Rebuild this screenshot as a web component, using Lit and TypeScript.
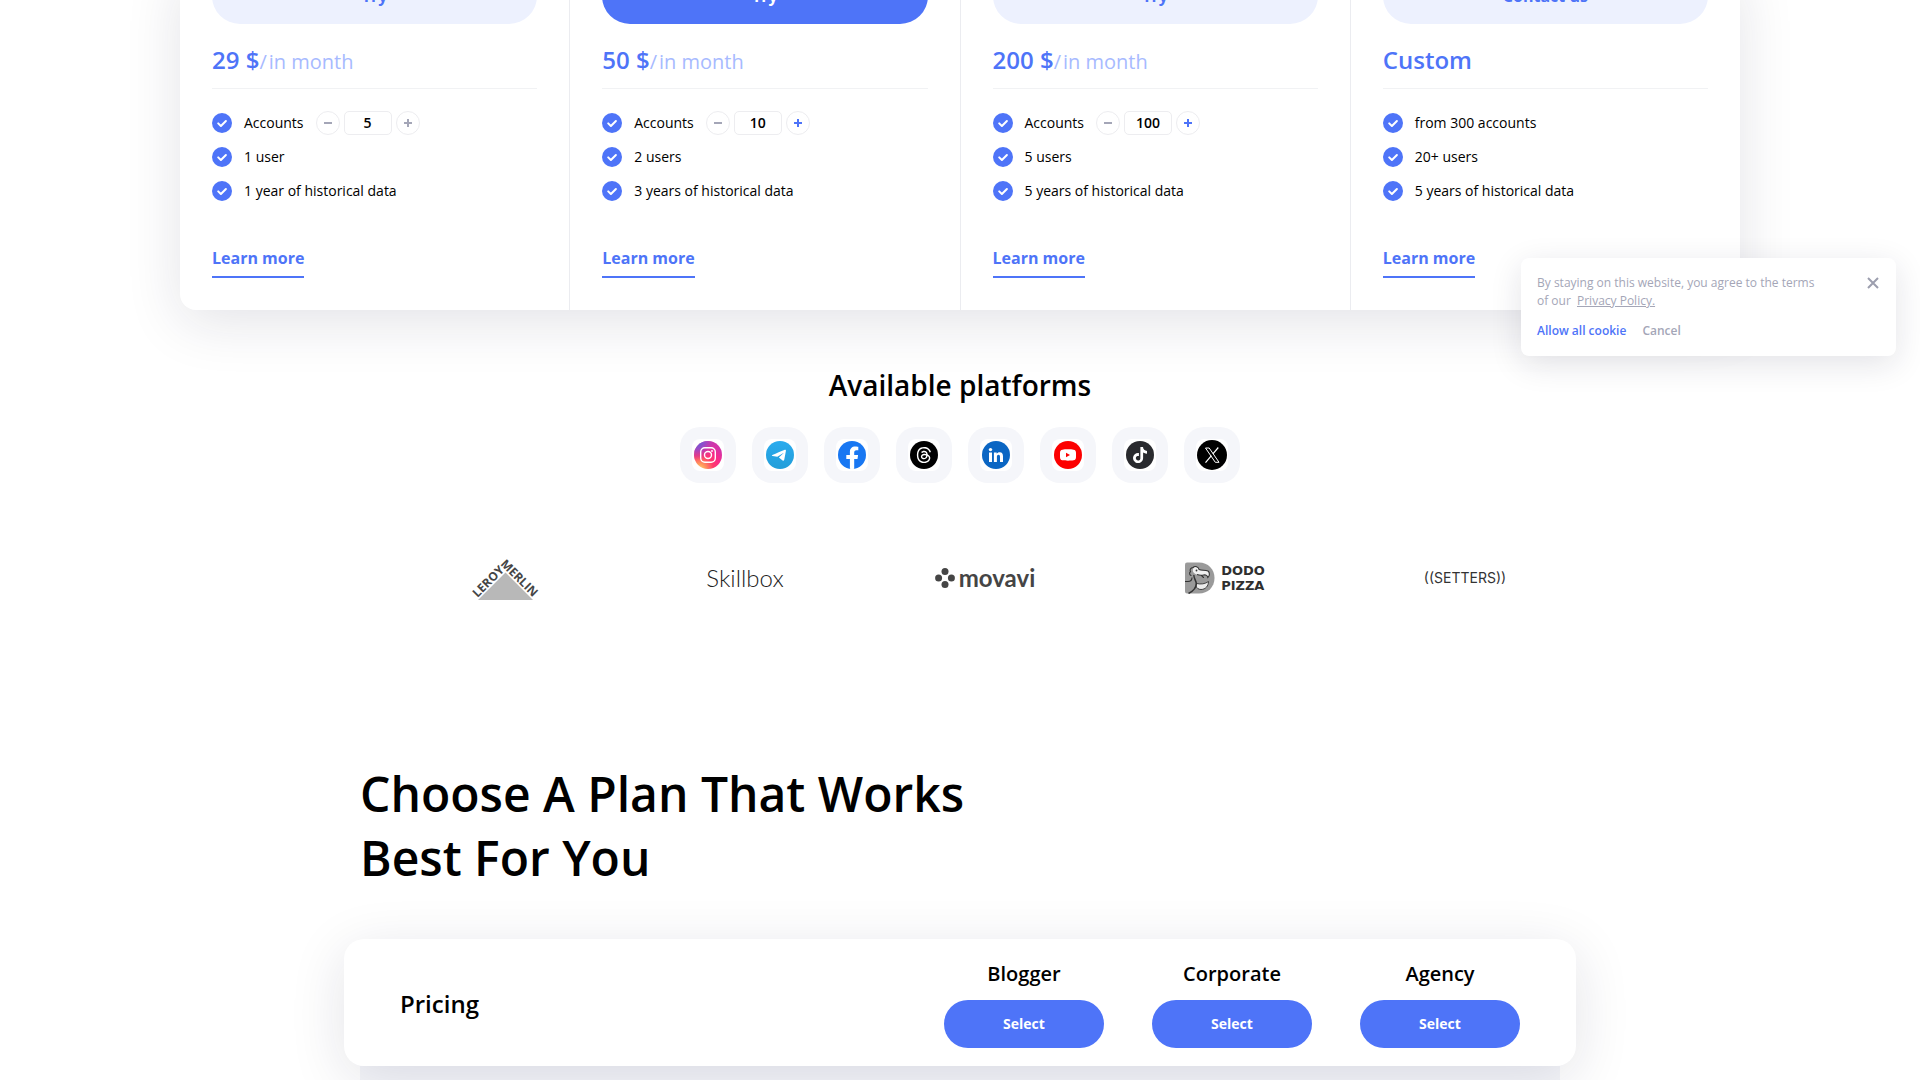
import { LitElement, html, css, svg, nothing } from "lit";
import { customElement, property } from "lit/decorators.js";

interface Plan {
  id: string;
  action: string;
  primary?: boolean;
  price: string;
  period?: string;
  accounts?: number;
  canAdd?: boolean;
  features: string[];
}

const PLANS: Plan[] = [
  { id: "start", action: "Try", price: "29 $", period: "in month", accounts: 5, features: ["1 user", "1 year of historical data"] },
  { id: "blogger", action: "Try", primary: true, price: "50 $", period: "in month", accounts: 10, canAdd: true, features: ["2 users", "3 years of historical data"] },
  { id: "corporate", action: "Try", price: "200 $", period: "in month", accounts: 100, canAdd: true, features: ["5 users", "5 years of historical data"] },
  { id: "custom", action: "Contact us", price: "Custom", features: ["from 300 accounts", "20+ users", "5 years of historical data"] },
];

const check = html`<svg class="check" viewBox="0 0 20 20" aria-hidden="true">
  <circle cx="10" cy="10" r="10" fill="#4e74f8" />
  <path d="M6.2 10.4 L8.9 13 L13.9 8" fill="none" stroke="#fff" stroke-width="2" stroke-linecap="round" stroke-linejoin="round" />
</svg>`;

@customElement("plan-column")
export class PlanColumn extends LitElement {
  @property({ attribute: false }) plan!: Plan;

  static styles = css`
    :host {
      display: flex;
      flex-direction: column;
      align-items: stretch;
      padding: 0 32px 32px;
      font-family: "Open Sans", sans-serif;
    }
    .action {
      height: 56px;
      border: 0;
      border-radius: 28px;
      background: #edf1fe;
      color: #4e74f8;
      font: 700 16px/24px "Open Sans", sans-serif;
    }
    .action.primary {
      background: #4e74f8;
      color: #fff;
    }
    .price {
      margin: 20px 0 0;
      padding-bottom: 12px;
      border-bottom: 1px solid #f1f2f4;
      color: #4e74f8;
      font-size: 24px;
      font-weight: 600;
      line-height: 32px;
    }
    .period {
      color: #a7baff;
      font-size: 20px;
      font-weight: 400;
      line-height: 24px;
    }
    .slash {
      margin-right: 2px;
    }
    .features {
      display: flex;
      flex-direction: column;
      gap: 10px;
      margin: 22px 0 43px;
      padding: 0;
      list-style: none;
    }
    .feature {
      display: flex;
      align-items: center;
      gap: 12px;
      color: #000;
      font-size: 14px;
      line-height: 24px;
    }
    .check {
      width: 20px;
      height: 20px;
    }
    .stepper {
      display: flex;
      gap: 4px;
    }
    .step {
      display: grid;
      place-items: center;
      box-sizing: border-box;
      width: 24px;
      height: 24px;
      padding: 0;
      border: 1px solid #ededf0;
      border-radius: 50%;
      background: #fff;
      color: #a4a6b7;
    }
    .step.on {
      color: #4e74f8;
    }
    .step svg {
      width: 8px;
      height: 8px;
    }
    .amount {
      box-sizing: border-box;
      width: 48px;
      height: 24px;
      padding: 0 0 2px;
      border: 1px solid #ededf0;
      border-radius: 5px;
      color: #000;
      font: 600 14px/20px "Open Sans", sans-serif;
      text-align: center;
    }
    .more {
      align-self: flex-start;
      padding-bottom: 6px;
      border-bottom: 2px solid #4e74f8;
      color: #4e74f8;
      font-size: 16px;
      font-weight: 700;
      line-height: 24px;
      text-decoration: none;
    }
  `;

  render() {
    const p = this.plan;
    return html`
      <button class="action ${p.primary ? "primary" : ""}">${p.action}</button>
      <p class="price">${p.price}${p.period ? html`<span class="period"><span class="slash">/</span>${p.period}</span>` : nothing}</p>
      <ul class="features">
        ${p.accounts
          ? html`<li class="feature">
              ${check}<label for="accounts-${p.id}">Accounts</label>
              <div class="stepper">
                <button class="step" aria-label="Fewer accounts">
                  <svg viewBox="0 0 8 8"><path d="M0 4H8" stroke="currentColor" stroke-width="2" /></svg>
                </button>
                <input class="amount" id="accounts-${p.id}" type="text" inputmode="numeric" .value=${String(p.accounts)} />
                <button class="step ${p.canAdd ? "on" : ""}" aria-label="More accounts">
                  <svg viewBox="0 0 8 8"><path d="M0 4H8M4 0V8" stroke="currentColor" stroke-width="2" /></svg>
                </button>
              </div>
            </li>`
          : nothing}
        ${p.features.map((f) => html`<li class="feature">${check}<span>${f}</span></li>`)}
      </ul>
      <a class="more" href="#${p.id}">Learn more</a>
    `;
  }
}

const PLATFORMS = [
  {
    name: "Instagram",
    art: svg`<defs>
        <radialGradient id="ig-warm" cx="0.2" cy="1.02" r="1">
          <stop offset="0" stop-color="#ffd879" /><stop offset="0.2" stop-color="#ff9a5c" />
          <stop offset="0.5" stop-color="#ff3a6c" /><stop offset="0.75" stop-color="#f92a8a" /><stop offset="1" stop-color="#d433a8" />
        </radialGradient>
        <radialGradient id="ig-cool" cx="0.1" cy="0" r="0.7">
          <stop offset="0" stop-color="#4f66e0" /><stop offset="0.45" stop-color="#8a4fd0" stop-opacity="0.8" /><stop offset="1" stop-color="#c837ab" stop-opacity="0" />
        </radialGradient>
      </defs>
      <circle cx="16" cy="16" r="14" fill="url(#ig-warm)" /><circle cx="16" cy="16" r="14" fill="url(#ig-cool)" />
      <rect x="8.7" y="8.7" width="14.6" height="14.6" rx="4.2" fill="none" stroke="#fff" stroke-width="1.4" />
      <circle cx="16" cy="16" r="3.5" fill="none" stroke="#fff" stroke-width="1.4" /><circle cx="20" cy="12" r="0.9" fill="#fff" />`,
  },
  {
    name: "Telegram",
    art: svg`<defs><linearGradient id="tg" x1="0" y1="0" x2="0" y2="1"><stop offset="0" stop-color="#2aabee" /><stop offset="1" stop-color="#229ed9" /></linearGradient></defs>
      <circle cx="16" cy="16" r="14" fill="url(#tg)" />
      <path d="M8.3 15.9C12.4 14.1 17.1 12.2 20.3 10.9C21.5 10.4 22.1 10.9 21.9 12L20.3 20.6C20.1 21.7 19.5 21.9 18.6 21.4L14.9 18.6L19.4 14.3C19.6 14.1 19.3 14 19 14.2L13.3 17.8L8.6 16.9C7.7 16.7 7.7 16.2 8.3 15.9Z" fill="#fff" />`,
  },
  {
    name: "Facebook",
    art: svg`<circle cx="16" cy="16" r="14" fill="#1877f2" />
      <path d="M21.5 20L22.1 16H18.2V13.4C18.2 12.3 18.7 11.2 20.5 11.2H22.3V7.8S20.7 7.5 19.2 7.5C16 7.5 13.9 9.4 13.9 12.9V16H10.3V20H13.9V29.85A14 14 0 0 0 18.2 29.85V20Z" fill="#fff" />`,
  },
  {
    name: "Threads",
    art: svg`<circle cx="16" cy="16" r="14" fill="#000" />
      <g transform="translate(7.9 8) scale(0.67)"><path fill="#fff" d="M12.186 24h-.007c-3.581-.024-6.334-1.205-8.184-3.509C2.35 18.44 1.5 15.586 1.472 12.01v-.017c.03-3.579.879-6.43 2.525-8.482C5.845 1.205 8.6.024 12.18 0h.014c2.746.02 5.043.725 6.826 2.098 1.677 1.29 2.858 3.13 3.509 5.467l-2.04.569c-1.104-3.96-3.898-5.984-8.304-6.015-2.91.022-5.11.936-6.54 2.717C4.307 6.504 3.616 8.914 3.589 12c.027 3.086.718 5.496 2.057 7.164 1.43 1.783 3.631 2.698 6.54 2.717 2.623-.02 4.358-.631 5.8-2.045 1.647-1.613 1.618-3.593 1.09-4.798-.31-.71-.873-1.3-1.634-1.75-.192 1.352-.622 2.446-1.284 3.272-.886 1.102-2.14 1.704-3.73 1.79-1.202.065-2.361-.218-3.259-.801-1.063-.689-1.685-1.74-1.752-2.964-.065-1.19.408-2.285 1.33-3.082.88-.76 2.119-1.207 3.583-1.291a13.853 13.853 0 0 1 3.02.142c-.126-.742-.375-1.332-.75-1.757-.513-.586-1.308-.883-2.359-.89h-.029c-.844 0-1.992.232-2.721 1.32L7.734 7.847c.98-1.454 2.568-2.256 4.478-2.256h.044c3.194.02 5.097 1.975 5.287 5.388.108.046.216.094.321.142 1.49.7 2.58 1.761 3.154 3.07.797 1.82.871 4.79-1.548 7.158-1.85 1.81-4.094 2.628-7.277 2.65Zm1.003-11.69c-.242 0-.487.007-.739.021-1.836.103-2.98.946-2.916 2.143.067 1.256 1.452 1.839 2.784 1.767 1.224-.065 2.818-.543 3.086-3.71a10.5 10.5 0 0 0-2.215-.221z" /></g>`,
  },
  {
    name: "LinkedIn",
    art: svg`<circle cx="16" cy="16" r="14" fill="#0b66c3" />
      <circle cx="10.5" cy="10.6" r="1.7" fill="#fff" />
      <path d="M9 13.5H12V23H9ZM13.9 13.5H16.7V14.8C17.2 13.9 18.3 13.2 19.7 13.2C22.3 13.2 23 15 23 17.4V23H20V18C20 16.7 19.8 15.7 18.5 15.7C17.2 15.7 16.9 16.7 16.9 17.9V23H13.9Z" fill="#fff" />`,
  },
  {
    name: "YouTube",
    art: svg`<circle cx="16" cy="16" r="14" fill="#fc0000" />
      <path d="M10.5 10.7C13 10.2 19 10.2 21.5 10.7C23.4 11 24 12 24 14V18C24 20 23.4 21 21.5 21.3C19 21.8 13 21.8 10.5 21.3C8.6 21 8 20 8 18V14C8 12 8.6 11 10.5 10.7Z" fill="#fff" />
      <path d="M14 13.8L18 16L14 18.2Z" fill="#fc0000" />`,
  },
  {
    name: "TikTok",
    art: svg`<circle cx="16" cy="16" r="14" fill="#292a2e" />
      <g transform="translate(8 8) scale(0.67)"><path fill="#fff" d="M12.525.02c1.31-.02 2.61-.01 3.91-.02.08 1.53.63 3.09 1.75 4.17 1.12 1.11 2.7 1.62 4.24 1.79v4.03c-1.44-.05-2.89-.35-4.2-.97-.57-.26-1.1-.59-1.62-.93-.01 2.92.01 5.84-.02 8.75-.08 1.4-.54 2.79-1.35 3.94-1.31 1.92-3.58 3.17-5.91 3.21-1.43.08-2.86-.31-4.08-1.03-2.02-1.19-3.44-3.37-3.65-5.71-.02-.5-.03-1-.01-1.49.18-1.9 1.12-3.72 2.58-4.96 1.66-1.44 3.98-2.13 6.15-1.72.02 1.48-.04 2.96-.04 4.44-.99-.32-2.15-.23-3.02.37-.63.41-1.11 1.04-1.36 1.75-.21.51-.15 1.07-.14 1.61.24 1.64 1.82 3.02 3.5 2.87 1.12-.01 2.19-.66 2.77-1.61.19-.33.4-.67.41-1.06.1-1.79.06-3.57.07-5.36.01-4.03-.01-8.05.02-12.07z" /></g>`,
  },
  {
    name: "X",
    art: svg`<circle cx="16" cy="16" r="15" fill="#000" />
      <path d="M9.5 9H13.2L23 23.3H19.3Z" fill="none" stroke="#fff" stroke-width="1" />
      <path d="M22.3 8.5L16.9 14.9M15.4 16.6L9.5 23.7" fill="none" stroke="#fff" stroke-width="1.2" />`,
  },
];

@customElement("app-root")
export class AppRoot extends LitElement {
  static styles = css`
    :host {
      display: block;
      font-family: "Open Sans", sans-serif;
      color: #000;
    }
    .page {
      position: relative;
      display: flex;
      flex-direction: column;
      box-sizing: border-box;
      min-height: 100vh;
      overflow: hidden;
      background: #fff;
    }
    .plans {
      display: flex;
      box-sizing: border-box;
      width: calc(100% - 48px);
      max-width: 1560px;
      margin: -32px auto 0;
      border-radius: 0 0 16px 16px;
      background: #fff;
      box-shadow: 0 12px 56px rgba(24, 28, 60, 0.12);
    }
    .column {
      flex: 1;
      border-right: 1px solid #ebecf0;
    }
    .column:last-child {
      border-right: 0;
    }
    .platforms {
      display: flex;
      flex-direction: column;
      align-items: center;
      gap: 22px;
      margin-top: 55px;
    }
    .subtitle {
      margin: 0;
      font-size: 28px;
      font-weight: 600;
      line-height: 40px;
    }
    .tiles {
      display: flex;
      gap: 16px;
      margin: 0;
      padding: 0;
      list-style: none;
    }
    .tile {
      display: grid;
      place-items: center;
      width: 56px;
      height: 56px;
      border-radius: 20px;
      background: #f5f6fa;
    }
    .tile svg {
      width: 32px;
      height: 32px;
      border-radius: 8px;
      background: #fff;
    }
    .brands {
      display: grid;
      grid-template-columns: repeat(5, 1fr);
      align-items: center;
      justify-items: center;
      width: 100%;
      max-width: 1200px;
      height: 60px;
      margin: 65px auto 0;
      padding-left: 50px;
      color: #454545;
    }
    .brand {
      display: flex;
      align-items: center;
    }
    .leroy {
      width: 76px;
      height: 48px;
    }
    .leroy-text {
      font: 700 12px "Open Sans", sans-serif;
      fill: #454545;
    }
    .skillbox {
      color: #222;
      font: 300 24px/28px "Lato", sans-serif;
    }
    .movavi {
      gap: 4px;
      font: 700 24px/28px "Lato", sans-serif;
    }
    .dots {
      width: 20px;
      height: 20px;
    }
    .dodo {
      gap: 6px;
      color: #2f2f2f;
      font: 700 13px/15px "DejaVu Sans", sans-serif;
    }
    .bird {
      width: 30px;
      height: 32px;
    }
    .setters {
      color: #333;
      font: 400 14px/20px "Inter", sans-serif;
    }
    .compare {
      display: flex;
      flex-direction: column;
      flex: 1;
      box-sizing: border-box;
      width: calc(100% - 48px);
      max-width: 1232px;
      margin: 154px auto 0;
    }
    .title {
      max-width: 700px;
      margin: 0 16px 49px;
      font-size: 48px;
      font-weight: 600;
      line-height: 64px;
    }
    .bar {
      display: flex;
      align-items: center;
      justify-content: space-between;
      position: relative;
      padding: 21px 56px 18px;
      border-radius: 20px;
      background: #fff;
      box-shadow: 0 12px 56px rgba(24, 28, 60, 0.12);
    }
    .bar-title {
      margin: 0;
      font-size: 24px;
      font-weight: 600;
      line-height: 32px;
    }
    .choices {
      display: flex;
      gap: 48px;
    }
    .choice {
      display: flex;
      flex-direction: column;
      align-items: center;
      gap: 12px;
      width: 160px;
      font-size: 20px;
      font-weight: 600;
      line-height: 28px;
    }
    .select {
      width: 100%;
      height: 48px;
      border: 0;
      border-radius: 24px;
      background: #4e74f8;
      color: #fff;
      font: 700 14px/20px "Open Sans", sans-serif;
    }
    .rows {
      flex: 1;
      min-height: 14px;
      margin: 0 16px;
      background: #f5f6fa;
    }
    .cookie {
      position: absolute;
      top: 258px;
      right: 24px;
      box-sizing: border-box;
      width: 375px;
      padding: 16px;
      border-radius: 8px;
      background: #fff;
      box-shadow: 0 8px 32px rgba(24, 28, 60, 0.12);
      color: #a4a6b7;
      font-size: 12px;
      line-height: 18px;
    }
    .cookie-top {
      display: flex;
      justify-content: space-between;
      align-items: flex-start;
    }
    .cookie-text {
      max-width: 290px;
      margin: 0;
    }
    .policy {
      margin-left: 3px;
      color: inherit;
    }
    .close {
      display: grid;
      place-items: center;
      width: 14px;
      height: 18px;
      padding: 0;
      border: 0;
      background: none;
      color: #9c9eae;
    }
    .close svg {
      width: 12px;
      height: 12px;
    }
    .cookie-actions {
      display: flex;
      gap: 16px;
      margin-top: 12px;
    }
    .link {
      padding: 0;
      border: 0;
      background: none;
      color: #a4a6b7;
      font: 600 12px/18px "Open Sans", sans-serif;
    }
    .link.accept {
      color: #4e74f8;
    }
  `;

  render() {
    return html`
      <main class="page">
        <section class="plans">
          ${PLANS.map((p) => html`<plan-column class="column" .plan=${p}></plan-column>`)}
        </section>

        <section class="platforms">
          <h2 class="subtitle">Available platforms</h2>
          <ul class="tiles">
            ${PLATFORMS.map((p) => html`<li class="tile"><svg viewBox="0 0 32 32" role="img" aria-label=${p.name}>${p.art}</svg></li>`)}
          </ul>
        </section>

        <section class="brands">
          <div class="brand">
            <svg class="leroy" viewBox="0 0 76 48">
              <path d="M38.5 18.5L66 46H11Z" fill="#b8b8b8" />
              <text class="leroy-text" transform="translate(10.5 44) rotate(-45)">LEROY</text>
              <text class="leroy-text" transform="translate(33 10.5) rotate(45)">MERLIN</text>
            </svg>
          </div>
          <div class="brand skillbox">Skillbox</div>
          <div class="brand movavi">
            <svg class="dots" viewBox="0 0 20 20" fill="#454545">
              <circle cx="10" cy="3.6" r="3.5" /><circle cx="3.6" cy="10" r="3.5" />
              <circle cx="16.4" cy="10" r="3.5" /><circle cx="10" cy="16.4" r="3.5" />
            </svg>
            <span>movavi</span>
          </div>
          <div class="brand dodo">
            <svg class="bird" viewBox="0 0 30 32">
              <path d="M2 0.5H14C23 0.5 29.5 7 29.5 16C29.5 25 23 31.5 14 31.5H2Q0 31.5 0 29.5V2.5Q0 0.5 2 0.5Z" fill="#9a9a9a" />
              <path d="M8.5 6C9.5 4 13 4.500 14 7C16 9.500 20 7.500 23 9C25 10.500 24.800 14 22.800 15.500C22.500 13.500 21 12.600 18.500 13C15 13.600 11.500 13 9 11C7.500 9.500 7.500 7.500 8.500 6Z" fill="#f0f0f0" />
              <path d="M14 7.500C17 9 20 7.500 23 9C25 10.500 24.800 14 22.800 15.500C22.500 13.500 21 12.600 18.500 13C16 13.400 14 13.200 12 12.500" fill="none" stroke="#333" stroke-width="1.100" />
              <path d="M14 7.500C13.500 4.500 10 3.800 8 5.500C5.500 5.800 4.500 8 5.500 9.500C4 11 4.500 13 6 13.500M16.500 13.500L18.500 15.500" fill="none" stroke="#333" stroke-width="1.100" stroke-linecap="round" />
              <circle cx="11.500" cy="8.500" r="0.900" fill="#333" />
              <path d="M11.500 21.500C16 22.500 20 22 23.500 19.500C23.500 24 20.500 27.500 16 27.500C13.500 27.500 11.500 26 11 24Z" fill="#ececec" stroke="#333" stroke-width="0.900" />
              <path d="M9 13C8.500 15 10 17 11 20C12 24 9 28.500 3.500 31.500" fill="none" stroke="#333" stroke-width="1.500" />
              <path d="M0 19.500H3C5.500 19.500 7 18 7 15.500" fill="none" stroke="#333" stroke-width="1.100" />
            </svg>
            <span>DODO<br />PIZZA</span>
          </div>
          <div class="brand setters">((SETTERS))</div>
        </section>

        <section class="compare">
          <h1 class="title">Choose A Plan That Works Best For You</h1>
          <div class="bar">
            <h2 class="bar-title">Pricing</h2>
            <div class="choices">
              ${["Blogger", "Corporate", "Agency"].map(
                (name) => html`<div class="choice"><span>${name}</span><button class="select">Select</button></div>`
              )}
            </div>
          </div>
          <div class="rows"></div>
        </section>

        <aside class="cookie">
          <div class="cookie-top">
            <p class="cookie-text">By staying on this website, you agree to the terms of our <a class="policy" href="#privacy">Privacy Policy.</a></p>
            <button class="close" aria-label="Close">
              <svg viewBox="0 0 12 12"><path d="M1 1L11 11M11 1L1 11" stroke="currentColor" stroke-width="2" /></svg>
            </button>
          </div>
          <div class="cookie-actions">
            <button class="link accept">Allow all cookie</button>
            <button class="link">Cancel</button>
          </div>
        </aside>
      </main>
    `;
  }
}
